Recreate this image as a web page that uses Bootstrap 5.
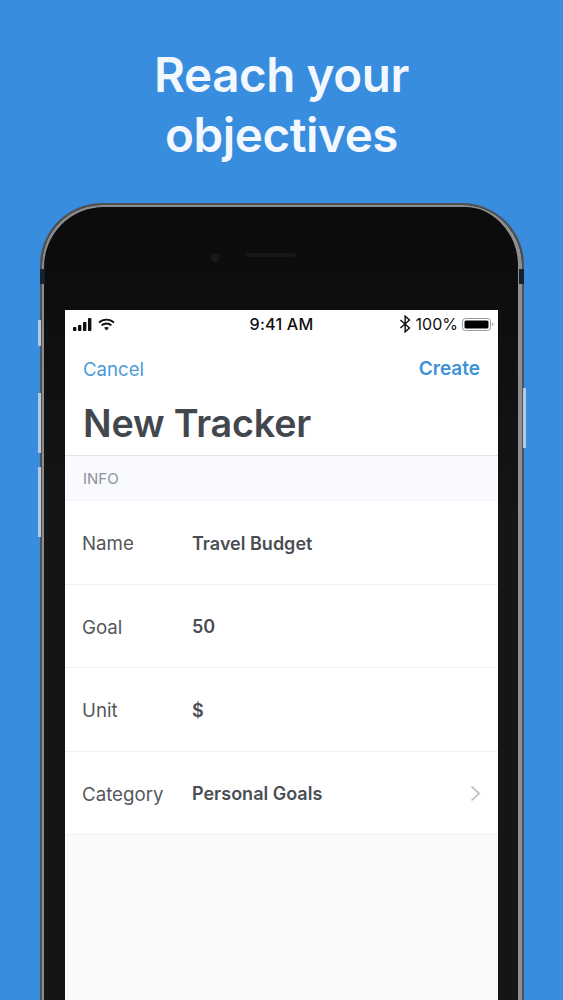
<!DOCTYPE html>
<html lang="en">
<head>
<meta charset="utf-8">
<title>New Tracker</title>
<link href="https://cdn.jsdelivr.net/npm/bootstrap@5.3.0/dist/css/bootstrap.min.css" rel="stylesheet">
<style>
html,body{height:1000px;overflow:hidden}
body{background:#398ddf;font-family:Inter,"Liberation Sans",sans-serif}
.hero{height:203px;padding-top:45px;color:#f2f8fe;font-size:47.5px;font-weight:600;line-height:60px;letter-spacing:-.4px;margin:0}
.phone-wrap{margin-left:40px;width:484px;height:797px;position:relative}
.phone-body{height:100%;border-radius:62px 62px 0 0;background:linear-gradient(#0b0b0d,#151516 40%);border:2px solid #505153;border-bottom:0;box-shadow:inset 2px 2px 0 #8a8b8d,inset -4px 0 0 #8e8f91;padding:105px 24px 0 23px}
.side-btn{position:absolute;width:3px;background:#b7c9dc}
.band{position:absolute;width:5px;height:15px;top:66px;background:#17222f}
.sensor{position:absolute;left:171px;top:50px;width:9px;height:9px;border-radius:50%;background:#18181a}
.speaker{position:absolute;left:206px;top:50px;width:50px;height:4px;border-radius:3px;background:#161618}
.screen{height:100%;background:#f9fafc}
.status{height:28px;background:#fff;padding:0 3px 0 8px;color:#111;position:relative}
.clock{position:absolute;left:0;right:0;text-align:center;font-weight:500;font-size:16.2px;line-height:28px;letter-spacing:.2px}
.pct{font-size:16px;font-weight:400;margin:0 4px 0 3px}
.bt-icon{margin-right:1px}
.nav-head{background:#fff;height:118px;padding:17px 18px 0;border-bottom:1px solid #e2e4e7}
.act{font-size:18.6px;line-height:28px;color:#4c9ad8}
.act-b{font-weight:600;font-size:19px;color:#3f92d6}
.big-title{font-size:37.7px;line-height:44px;font-weight:600;color:#42474e;margin:18px 0 0;letter-spacing:-.2px}
.sect{height:45px;padding-left:18px;color:#8d929a;font-size:15px;line-height:45px;background:#f8fafd;border-bottom:1px solid #f1f3f6}
.field{height:83.5px;background:#fff;border-bottom:1px solid #eff0f2;padding:2px 17px 0;color:#53575d;font-size:18.7px}
.lab{width:110px;padding-top:2px}
.val{font-size:18px;font-weight:600;color:#4a4e54}
</style>
</head>
<body>
<h1 class="hero text-center">Reach your<br>objectives</h1>
<div class="phone-wrap">
  <div class="side-btn" style="left:-2px;top:117px;height:26px"></div>
  <div class="side-btn" style="left:-2px;top:190px;height:60px"></div>
  <div class="side-btn" style="left:-2px;top:264px;height:70px"></div>
  <div class="side-btn" style="right:-2px;top:185px;height:60px"></div>
  <span class="band" style="left:0"></span>
  <span class="band" style="right:0"></span>
  <div class="phone-body">
    <span class="sensor"></span><span class="speaker"></span>
    <div class="screen">
      <div class="status d-flex align-items-center justify-content-between">
        <div class="clock">9:41 AM</div>
        <div class="d-flex align-items-center gap-1">
          <svg width="21" height="13" viewBox="0 0 21 13" fill="#111"><rect x="0" y="9" width="3.4" height="4" rx=".8"/><rect x="5" y="7" width="3.4" height="6" rx=".8"/><rect x="10" y="4" width="3.4" height="9" rx=".8"/><rect x="15" y="0" width="3.4" height="13" rx=".8"/></svg>
          <svg width="17" height="13" viewBox="0 0 17 13" fill="none" stroke="#111" stroke-width="1.9"><path d="M1 4.6C5.2.6 11.8.6 16 4.6"/><path d="M3.6 7.4c2.8-2.6 7-2.6 9.8 0"/><path d="M8.5 12.6 6 9.8c1.5-1.2 3.5-1.2 5 0z" fill="#111" stroke="none"/></svg>
        </div>
        <div class="d-flex align-items-center">
          <svg class="bt-icon" width="13" height="18" viewBox="0 0 11 16" fill="none" stroke="#111" stroke-width="1.3"><path d="M1 4.5 9 11.5 5.2 15V1L9 4.5 1 11.5"/></svg>
          <span class="pct">100%</span>
          <svg width="33" height="14" viewBox="0 0 33 14"><rect x=".5" y="1.5" width="28" height="12" rx="3" fill="none" stroke="#999"/><rect x="2.5" y="3.4" width="24" height="8.2" rx="1.6" fill="#000"/><path d="M30 5.5c1 .3 1.4.8 1.4 2s-.4 1.2-1.4 1.5z" fill="#aaa"/></svg>
        </div>
      </div>
      <div class="nav-head">
        <div class="d-flex justify-content-between act"><span>Cancel</span><span class="act-b">Create</span></div>
        <div class="big-title">New Tracker</div>
      </div>
      <div class="sect">INFO</div>
      <div class="field d-flex align-items-center"><span class="lab">Name</span><span class="val">Travel Budget</span></div>
      <div class="field d-flex align-items-center"><span class="lab">Goal</span><span class="val">50</span></div>
      <div class="field d-flex align-items-center"><span class="lab">Unit</span><span class="val">$</span></div>
      <div class="field d-flex align-items-center"><span class="lab">Category</span><span class="val flex-grow-1">Personal Goals</span>
        <svg width="11" height="17" viewBox="0 0 11 17" fill="none" stroke="#b9bcc1" stroke-width="1.7"><path d="M1.5 1.5 9 8.5 1.5 15.5"/></svg>
      </div>
    </div>
  </div>
</div>
<script src="https://cdn.jsdelivr.net/npm/bootstrap@5.3.0/dist/js/bootstrap.bundle.min.js"></script>
</body>
</html>
